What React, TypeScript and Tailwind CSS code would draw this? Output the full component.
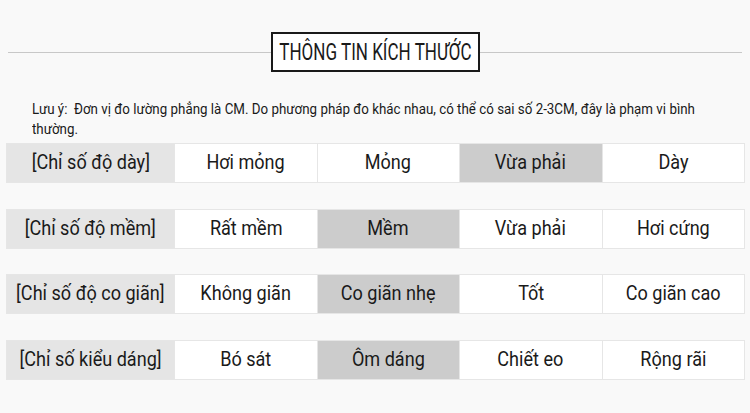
const rows = [
  { label: '[Chỉ số độ dày]', items: ['Hơi mỏng', 'Mỏng', 'Vừa phải', 'Dày'], active: 2 },
  { label: '[Chỉ số độ mềm]', items: ['Rất mềm', 'Mềm', 'Vừa phải', 'Hơi cứng'], active: 1 },
  { label: '[Chỉ số độ co giãn]', items: ['Không giãn', 'Co giãn nhẹ', 'Tốt', 'Co giãn cao'], active: 1 },
  { label: '[Chỉ số kiểu dáng]', items: ['Bó sát', 'Ôm dáng', 'Chiết eo', 'Rộng rãi'], active: 1 },
]

// condensed look: Roboto squeezed horizontally
const Narrow = ({ children }: { children: React.ReactNode }) => (
  <span className="inline-block whitespace-nowrap scale-x-[0.86]">{children}</span>
)

export default function App() {
  return (
    <div className="w-[750px] h-[413px] bg-[#f9f9f9] text-[#1a1a1a] overflow-hidden font-['Roboto',sans-serif]">
      {/* Title */}
      <div className="flex items-center pt-[32px] px-[8px]">
        <div className="flex-1 h-px bg-[#c8c8c8]" />
        <div className="border-2 border-[#1a1a1a] bg-white h-[40px] w-[209px] flex items-center justify-center text-[24px] leading-none">
          <span className="inline-block whitespace-nowrap scale-x-[0.71]">THÔNG TIN KÍCH THƯỚC</span>
        </div>
        <div className="flex-1 h-px bg-[#c8c8c8]" />
      </div>

      {/* Note */}
      <div className="mt-[27px] pl-[32px]">
        <p className="w-[778px] origin-left scale-x-[0.89] text-[15px] leading-[20px]">
          Lưu ý:&nbsp; Đơn vị đo lường phẳng là CM. Do phương pháp đo khác nhau, có thể có sai số 2-3CM, đây là phạm vi bình thường.
        </p>
      </div>

      {/* Rows */}
      <div className="flex flex-col gap-[25.5px] mt-[4px] pl-[6px] pr-[5px]">
        {rows.map((r) => (
          <div key={r.label} className="flex h-[40px] border border-[#e6e6e6] text-[21px]">
            <div className="w-[167px] bg-[#e5e5e5] flex items-center justify-center">
              <Narrow>{r.label}</Narrow>
            </div>
            {r.items.map((it, i) => (
              <div
                key={it + i}
                className={`flex-1 flex items-center justify-center border-l border-[#e6e6e6] ${i === r.active ? 'bg-[#cccccc]' : 'bg-white'}`}
              >
                <Narrow>{it}</Narrow>
              </div>
            ))}
          </div>
        ))}
      </div>
    </div>
  )
}
